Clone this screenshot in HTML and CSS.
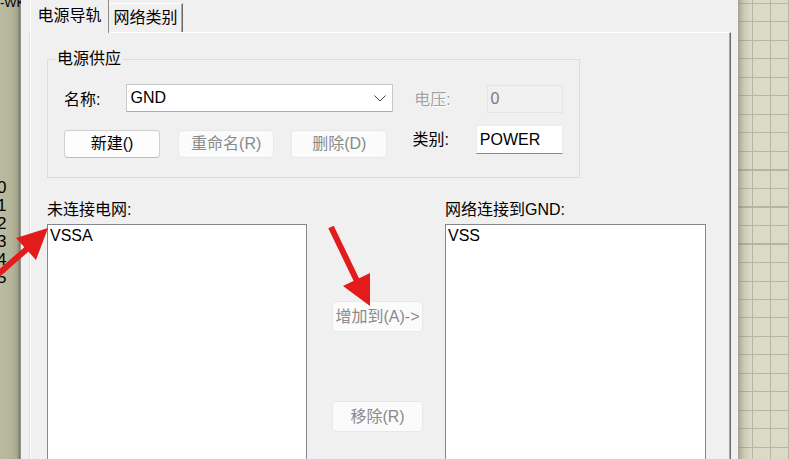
FILE: index.html
```html
<!DOCTYPE html>
<html>
<head>
<meta charset="utf-8">
<link rel="stylesheet" href="styles.css">
</head>
<body>
<div class="desk-left">
  <div class="wk">-WK</div>
  <div class="nums"><div>0</div><div>1</div><div>2</div><div>3</div><div>4</div><div>5</div></div>
</div>
<div class="dialog">
  <div class="tabs">
    <div class="tab tab-on">电源导轨</div>
    <div class="tab tab-off">网络类别</div>
  </div>
  <div class="panel">
    <fieldset class="group">
      <legend>电源供应</legend>
      <div class="grp-body">
        <div class="row row1">
          <span class="lbl lbl-name">名称:</span>
          <div class="combo"><span>GND</span><svg class="chev" width="12" height="7" viewBox="0 0 12 7"><polyline points="0.5,0.5 6,6 11.5,0.5" fill="none" stroke="#444" stroke-width="1"/></svg></div>
          <span class="lbl lbl-volt">电压:</span>
          <div class="field field-dis">0</div>
        </div>
        <div class="row row2">
          <button class="btn">新建()</button>
          <button class="btn btn-dis b2">重命名(R)</button>
          <button class="btn btn-dis b3">删除(D)</button>
          <span class="lbl lbl-cat">类别:</span>
          <div class="field field-on">POWER</div>
        </div>
      </div>
    </fieldset>
    <div class="nets">
      <div class="col col-l">
        <div class="cap">未连接电网:</div>
        <div class="list"><div class="item">VSSA</div></div>
      </div>
      <div class="mid">
        <button class="btn btn-dis mbtn">增加到(A)-&gt;</button>
        <button class="btn btn-dis mbtn m2">移除(R)</button>
      </div>
      <div class="col col-r">
        <div class="cap">网络连接到GND:</div>
        <div class="list"><div class="item">VSS</div></div>
      </div>
    </div>
  </div>
</div>
<div class="desk-right"></div>
<svg class="arrows" width="789" height="459" viewBox="0 0 789 459">
  <line x1="-4" y1="276" x2="28" y2="248" stroke="#e31b1b" stroke-width="6"/>
  <polygon points="48,228 16,238 36,260" fill="#e31b1b"/>
  <line x1="331" y1="227" x2="357" y2="281" stroke="#e31b1b" stroke-width="6"/>
  <polygon points="370,306 343,286 370,273" fill="#e31b1b"/>
</svg>
</body>
</html>
```
FILE: styles.css
```css
body {
  margin: 0;
  width: 789px;
  height: 459px;
  overflow: hidden;
  display: flex;
  position: relative;
  background: #f0f0f0;
  font-family: "Liberation Sans", "Noto Sans CJK SC", sans-serif;
  font-size: 16px;
  color: #000;
}

.desk-left {
  width: 21px;
  flex: none;
  overflow: hidden;
  background: linear-gradient(to right, #bbbba1 0, #b4b499 12px, #a6a68c 17px, #8a8a78 19px, #707068 20px, #b0b0b0 21px);
}
.wk {
  font-size: 13px;
  line-height: 13px;
  margin-top: -4px;
  white-space: nowrap;
}
.nums {
  margin-top: 170px;
  margin-left: -3px;
  font-size: 17px;
  line-height: 18px;
}

.dialog {
  width: 717px;
  flex: none;
  box-sizing: border-box;
  padding: 0 7px 0 9px;
  display: flex;
  flex-direction: column;
}
.tabs {
  display: flex;
  height: 32px;
  align-items: flex-end;
}
.tab {
  box-sizing: border-box;
  text-align: center;
}
.tab-on {
  width: 79px;
  height: 33px;
  margin-bottom: -1px;
  position: relative;
  z-index: 1;
  background: #f0f0f0;
  border-left: 1px solid #fff;
  border-right: 1px solid #8c8c8c;
  line-height: 32px;
}
.tab-off {
  width: 74px;
  height: 29px;
  border-top: 1px solid #fff;
  border-right: 1px solid #6a6a6a;
  box-shadow: inset -1px 0 0 #a8a8a8;
  line-height: 28px;
}
.panel {
  flex: 1;
  background: #f0f0f0;
  border-top: 1px solid #fff;
  border-left: 1px solid #fff;
  border-right: 1px solid #6a6a6a;
  box-shadow: -1px 0 0 #dcdcdc, inset -1px 0 0 #a8a8a8;
  padding-left: 16px;
  box-sizing: border-box;
}

.group {
  margin: 16px 0 0 0;
  padding: 0;
  width: 533px;
  min-width: 0;
  box-sizing: border-box;
  border: 1px solid #dcdcdc;
}
.group legend {
  margin-left: 7px;
  padding: 0 2px;
  line-height: 20px;
}
.grp-body {
  padding: 15px 16px 19px;
}
.row {
  display: flex;
}
.row1 {
  height: 28px;
  align-items: center;
}
.lbl {
  white-space: nowrap;
}
.lbl-name {
  width: 63px;
}
.combo {
  width: 269px;
  height: 28px;
  box-sizing: border-box;
  background: #fff;
  border: 1px solid #c8c8c8;
  border-bottom-color: #acacac;
  display: flex;
  align-items: center;
  justify-content: space-between;
  padding: 0 6px 0 3px;
  line-height: 26px;
}
.lbl-volt {
  margin-left: 21px;
  width: 73px;
  color: #a3a3a3;
  text-shadow: 1px 1px 0 #fff;
}
.field {
  box-sizing: border-box;
  padding-left: 3px;
}
.field-dis {
  width: 77px;
  height: 28px;
  margin-top: 2px;
  border: 1px solid #e4e4e4;
  line-height: 26px;
  color: #7a7a7a;
}
.row2 {
  margin-top: 13px;
  height: 33px;
}
.btn {
  font: inherit;
  width: 97px;
  height: 28px;
  padding: 0;
  box-sizing: border-box;
  border-radius: 4px;
  line-height: 26px;
  align-self: flex-end;
  color: #000;
  background: #fdfdfd;
  border: 1px solid #d0d0d0;
  border-bottom-color: #bcbcbc;
  white-space: nowrap;
}
.btn-dis {
  background: #fbfbfb;
  border: 1px solid #e8e8e8;
  color: #8a8a8a;
}
.b2 {
  margin-left: 18px;
}
.b3 {
  margin-left: 17px;
}
.lbl-cat {
  margin-left: 25px;
  width: 64px;
  line-height: 29px;
  align-self: flex-start;
}
.field-on {
  width: 88px;
  height: 29px;
  background: #fff;
  border: 1px solid #ececec;
  border-bottom: 1px solid #8a8a8a;
  line-height: 27px;
  align-self: flex-start;
}

.nets {
  display: flex;
  margin-top: 21px;
}
.col-l {
  width: 260px;
}
.col-r {
  width: 261px;
}
.cap {
  height: 22px;
  line-height: 22px;
  margin-bottom: 3px;
  white-space: nowrap;
}
.list {
  height: 270px;
  box-sizing: border-box;
  background: #fff;
  border: 1px solid #828790;
  padding: 2px 0 0 2px;
  line-height: 18px;
}
.mid {
  width: 138px;
  box-sizing: border-box;
  padding: 102px 0 0 25px;
  display: flex;
  flex-direction: column;
  align-items: flex-start;
}
.mbtn {
  width: 91px;
  height: 31px;
  line-height: 29px;
  align-self: flex-start;
}
.m2 {
  margin-top: 69px;
}

.desk-right {
  width: 51px;
  flex: none;
  background-color: #dadac7;
  background-image:
    linear-gradient(to right, rgba(110,110,90,0.5) 0, rgba(110,110,90,0.15) 6px, rgba(110,110,90,0) 13px),
    repeating-linear-gradient(to right, transparent 0 14px, #b5b5a1 14px 15px, transparent 15px 18px),
    repeating-linear-gradient(to bottom, transparent 0 3px, #b5b5a1 3px 4px, transparent 4px 18.5px);
}

.arrows {
  position: absolute;
  left: 0;
  top: 0;
  pointer-events: none;
}
```
